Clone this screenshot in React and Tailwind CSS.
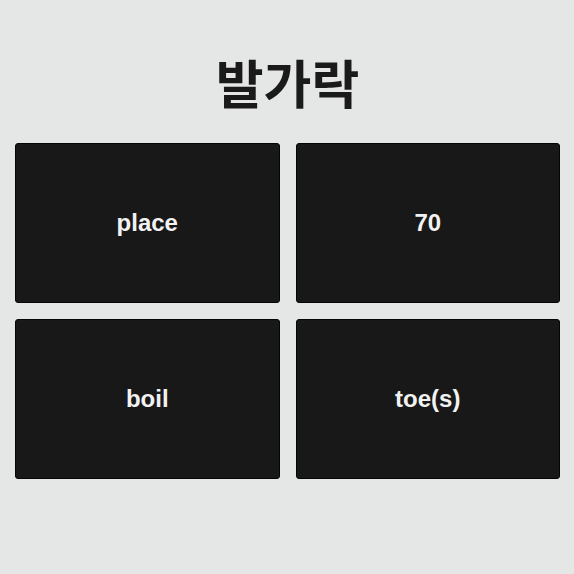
export default function App() {
  const cards = ['place', '70', 'boil', 'toe(s)'];

  return (
    <div className="min-h-[574px] bg-[#e5e7e6] pl-[15px] pr-[14px] pt-[50px]">
      <h1 className="text-center text-[52px] leading-[64px] font-bold text-[#1a1a1a] font-['Noto_Sans_CJK_KR',sans-serif]">
        발가락
      </h1>
      <div className="mt-[29px] grid grid-cols-2 gap-4">
        {cards.map((label) => (
          <div
            key={label}
            className="flex h-[160px] items-center justify-center rounded-[3px] border border-[#050505] bg-[#181818]"
          >
            <span className="text-[24px] font-bold text-[#f2f2f2] font-['Liberation_Sans',Arial,sans-serif]">
              {label}
            </span>
          </div>
        ))}
      </div>
    </div>
  );
}
